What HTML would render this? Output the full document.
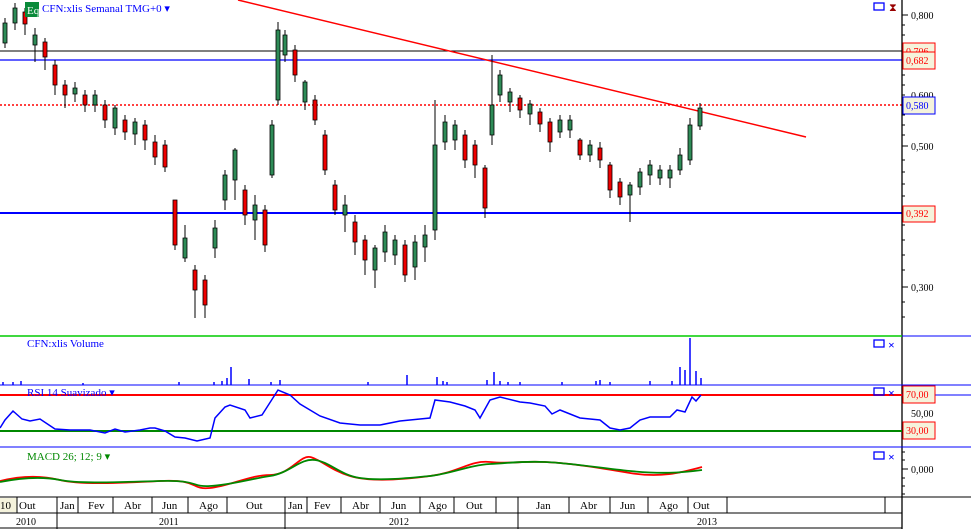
<!DOCTYPE html>
<html><head><meta charset="utf-8"><style>
body{margin:0;background:#fff;width:971px;height:529px;overflow:hidden;font-family:"Liberation Serif",serif}
svg{display:block}
</style></head><body>
<svg width="971" height="529" viewBox="0 0 971 529" xmlns="http://www.w3.org/2000/svg" font-family="Liberation Serif, serif">
<rect width="971" height="529" fill="#fff"/>
<!-- main horizontal lines -->
<line x1="0" y1="51" x2="902" y2="51" stroke="#000" stroke-width="1"/>
<line x1="0" y1="60" x2="902" y2="60" stroke="#00f" stroke-width="1.3"/>
<line x1="0" y1="105" x2="902" y2="105" stroke="#f00" stroke-width="1.5" stroke-dasharray="2,2"/>
<line x1="0" y1="213" x2="902" y2="213" stroke="#00f" stroke-width="2"/>
<line x1="238" y1="0" x2="806" y2="137" stroke="#f00" stroke-width="1.5"/>
<!-- candles -->
<g stroke="#000" stroke-width="1">
<path d="M5 18V48M15 3V30M25 8V35M35 28V62M45 38V70M55 60V95M65 80V108M75 82V102M85 90V112M95 90V112M105 100V128M115 105V135M125 115V140M135 118V145M145 120V150M155 135V165M165 140V172M175 200V250M185 225V262M195 265V318M205 275V318M215 220V258M225 170V210M235 148V200M245 185V225M255 195V240M265 205V252M272 120V178M278 22V105M285 30V62M295 45V82M305 80V110M315 95V125M325 130V175M335 180V215M345 195V232M355 215V255M365 235V275M375 245V288M385 225V262M395 235V265M405 240V282M415 235V280M425 225V262M435 100V240M445 115V150M455 120V150M465 130V168M475 140V178M485 165V218M492 55V145M500 70V102M510 88V112M520 95V118M530 100V125M540 108V132M550 118V152M560 115V138M570 115V138M580 138V160M590 140V162M600 142V168M610 162V198M620 178V205M630 182V222M640 168V195M650 160V185M660 165V185M670 165V188M680 148V175M690 118V165M700 103V130"/>
</g>
<g stroke="#000" stroke-width="0.8">
<path fill="#2e8b57" d="M3 23h4v20h-4zM13 8h4v15h-4zM33 35h4v10h-4zM73 88h4v6h-4zM93 95h4v10h-4zM113 108h4v20h-4zM133 122h4v12h-4zM183 258h4v-20h-4zM213 228h4v20h-4zM223 175h4v25h-4zM233 150h4v30h-4zM253 205h4v15h-4zM270 125h4v50h-4zM276 30h4v70h-4zM283 35h4v20h-4zM303 82h4v20h-4zM343 205h4v10h-4zM373 248h4v22h-4zM383 232h4v20h-4zM393 240h4v15h-4zM413 242h4v25h-4zM423 235h4v12h-4zM433 145h4v85h-4zM443 122h4v20h-4zM453 125h4v15h-4zM490 105h4v30h-4zM498 75h4v20h-4zM508 92h4v10h-4zM528 104h4v10h-4zM558 120h4v12h-4zM568 120h4v10h-4zM588 145h4v10h-4zM628 185h4v10h-4zM638 172h4v15h-4zM648 165h4v10h-4zM658 170h4v8h-4zM668 170h4v8h-4zM678 155h4v15h-4zM688 125h4v35h-4zM698 108h4v18h-4z"/>
<path fill="#e00" d="M23 12h4v12h-4zM43 42h4v15h-4zM53 65h4v20h-4zM63 85h4v10h-4zM83 95h4v10h-4zM103 105h4v15h-4zM123 120h4v12h-4zM143 125h4v15h-4zM153 142h4v15h-4zM163 145h4v22h-4zM173 200h4v45h-4zM193 270h4v20h-4zM203 280h4v25h-4zM243 190h4v25h-4zM263 210h4v35h-4zM293 50h4v25h-4zM313 100h4v20h-4zM323 135h4v35h-4zM333 185h4v25h-4zM353 222h4v20h-4zM363 240h4v20h-4zM403 245h4v30h-4zM463 135h4v25h-4zM473 145h4v20h-4zM483 168h4v40h-4zM518 98h4v12h-4zM538 112h4v12h-4zM548 122h4v20h-4zM578 140h4v15h-4zM598 148h4v12h-4zM608 165h4v25h-4zM618 182h4v15h-4z"/>
</g>
<!-- header -->
<rect x="25" y="2" width="14" height="15" fill="#0a8a3a"/>
<text x="27" y="14" font-size="11" fill="#fff">Eq</text>
<text x="42" y="12" font-size="11" fill="#00f">CFN:xlis Semanal TMG+0 ▾</text>
<rect x="874" y="3" width="10" height="7" fill="none" stroke="#00f" stroke-width="1.3"/>
<text x="889" y="11" font-size="11" fill="#900">⧗</text>
<!-- right axis -->
<line x1="902" y1="0" x2="902" y2="529" stroke="#000" stroke-width="1.3"/>
<g stroke="#000" stroke-width="1"><path d="M902 15h6M902 146h6M902 287h6M902 25h3M902 35h3M902 45h3M902 55h3M902 65h3M902 75h3M902 85h3M902 95h3M902 115h3M902 125h3M902 135h3M902 160h3M902 172h3M902 184h3M902 196h3M902 208h3M902 225h3M902 240h3M902 255h3M902 270h3M902 302h3M902 317h3"/></g>
<g font-size="10" fill="#000">
<text x="911" y="19">0,800</text><text x="911" y="99">0,600</text><text x="911" y="150">0,500</text><text x="911" y="291">0,300</text>
</g>
<rect x="903" y="43" width="32" height="17" fill="#f5f3dc" stroke="#f00"/><text x="906" y="55" font-size="10" fill="#f00">0,706</text>
<rect x="903" y="52" width="32" height="17" fill="#f5f3dc" stroke="#f00"/><text x="906" y="64" font-size="10" fill="#f00">0,682</text>
<rect x="903" y="97" width="32" height="17" fill="#f5f3dc" stroke="#00f"/><text x="906" y="109" font-size="10" fill="#00f">0,580</text>
<rect x="903" y="206" width="32" height="16" fill="#f5f3dc" stroke="#f00"/><text x="906" y="217" font-size="10" fill="#f00">0,392</text>
<!-- volume panel -->
<line x1="0" y1="336" x2="902" y2="336" stroke="#0c0" stroke-width="1.5"/>
<line x1="902" y1="336" x2="971" y2="336" stroke="#00f"/>
<text x="27" y="347" font-size="11" fill="#00f">CFN:xlis Volume</text>
<rect x="874" y="340" width="10" height="7" fill="none" stroke="#00f" stroke-width="1.3"/>
<text x="888" y="349" font-size="12" fill="#00f" font-weight="bold">×</text>
<g stroke="#00f" stroke-width="1.5"><path d="M3 385v-3M13 385v-3M21 385v-4M83 385v-2M179 385v-3M214 385v-3M222 385v-4M227 385v-7M231 385v-18M249 385v-6M271 385v-3M280 385v-5M368 385v-3M407 385v-10M437 385v-8M443 385v-4M447 385v-3M487 385v-5M494 385v-13M500 385v-4M508 385v-3M520 385v-3M562 385v-3M596 385v-4M600 385v-5M610 385v-3M650 385v-4M672 385v-4M680 385v-18M685 385v-15M690 385v-47M696 385v-14M701 385v-7"/></g>
<line x1="0" y1="385" x2="971" y2="385" stroke="#00f"/>
<!-- RSI -->
<line x1="0" y1="395" x2="902" y2="395" stroke="#f00" stroke-width="2"/>
<line x1="0" y1="431" x2="902" y2="431" stroke="#080" stroke-width="2"/>
<text x="27" y="396" font-size="11" fill="#00f">RSI 14 Suavizado ▾</text>
<rect x="874" y="388" width="10" height="7" fill="none" stroke="#00f" stroke-width="1.3"/>
<text x="888" y="397" font-size="12" fill="#00f" font-weight="bold">×</text>
<polyline fill="none" stroke="#00f" stroke-width="1.5" points="0,428 5,420 13,411 22,419 30,421 40,419 55,429 70,430 90,430 105,433 115,429 125,432 140,430 150,428 155,428 165,431 175,437 185,438 197,441 210,438 215,418 225,407 230,405 245,410 250,418 262,415 278,390 290,395 300,404 320,416 340,423 360,425 380,425 400,421 420,419 430,418 435,400 450,402 465,406 475,410 480,418 490,400 500,397 520,402 530,403 545,406 552,414 560,410 580,418 600,420 610,428 620,430 630,428 640,420 650,417 662,417 670,417 677,410 685,412 692,397 696,401 701,395"/>
<line x1="902" y1="395" x2="971" y2="395" stroke="#00f"/>
<rect x="903" y="386" width="32" height="17" fill="#f5f3dc" stroke="#f00"/><text x="906" y="398" font-size="10" fill="#f00">70,00</text>
<text x="911" y="417" font-size="10" fill="#000">50,00</text>
<rect x="903" y="422" width="32" height="17" fill="#f5f3dc" stroke="#f00"/><text x="906" y="434" font-size="10" fill="#f00">30,00</text>
<line x1="0" y1="447" x2="971" y2="447" stroke="#00f"/>
<!-- MACD -->
<text x="27" y="460" font-size="11" fill="#080">MACD 26; 12; 9 ▾</text>
<rect x="874" y="452" width="10" height="7" fill="none" stroke="#00f" stroke-width="1.3"/>
<text x="888" y="461" font-size="12" fill="#00f" font-weight="bold">×</text>
<path d="M0 481C20 476 40 475 60 480S120 483 160 481S190 490 210 488S250 475 270 475S300 455 310 457S330 470 350 476S400 480 430 476S470 460 490 462S520 461 545 462S600 468 630 473S680 473 702 467" fill="none" stroke="#f00" stroke-width="1.8"/>
<path d="M0 482C20 478 40 476 60 480S120 482 160 481S190 487 210 486S250 479 270 476S300 458 315 460S340 475 360 478S410 478 430 476S470 465 490 464S520 461 545 462S600 468 630 471S680 473 702 470" fill="none" stroke="#080" stroke-width="1.8"/>
<g stroke="#000"><path d="M902 469h6M902 452h3M902 460h3M902 478h3M902 486h3M902 494h3"/></g>
<text x="911" y="473" font-size="10" fill="#000">0,000</text>
<!-- time axis -->
<line x1="0" y1="497" x2="971" y2="497" stroke="#000"/>
<line x1="0" y1="513" x2="902" y2="513" stroke="#000"/>
<line x1="0" y1="528" x2="902" y2="528" stroke="#000"/>
<rect x="0" y="498" width="17" height="14" fill="#f5f3dc"/>
<g stroke="#000"><path d="M17 497v16M57 497v32M78 497v16M113 497v16M152 497v16M188 497v16M227 497v16M285 497v32M307 497v16M341 497v16M380 497v16M420 497v16M454 497v16M496 497v16M518 497v32M569 497v16M610 497v16M648 497v16M688 497v16M727 497v16M885 497v16"/></g>
<g font-size="11" fill="#000">
<text x="0" y="509">10</text><text x="19" y="509">Out</text><text x="60" y="509">Jan</text><text x="88" y="509">Fev</text><text x="124" y="509">Abr</text><text x="162" y="509">Jun</text><text x="199" y="509">Ago</text><text x="246" y="509">Out</text>
<text x="288" y="509">Jan</text><text x="314" y="509">Fev</text><text x="352" y="509">Abr</text><text x="391" y="509">Jun</text><text x="428" y="509">Ago</text><text x="466" y="509">Out</text>
<text x="536" y="509">Jan</text><text x="580" y="509">Abr</text><text x="620" y="509">Jun</text><text x="659" y="509">Ago</text><text x="693" y="509">Out</text>
<text x="16" y="525" font-size="10">2010</text><text x="159" y="525" font-size="10">2011</text><text x="389" y="525" font-size="10">2012</text><text x="697" y="525" font-size="10">2013</text>
</g>
</svg>
</body></html>
